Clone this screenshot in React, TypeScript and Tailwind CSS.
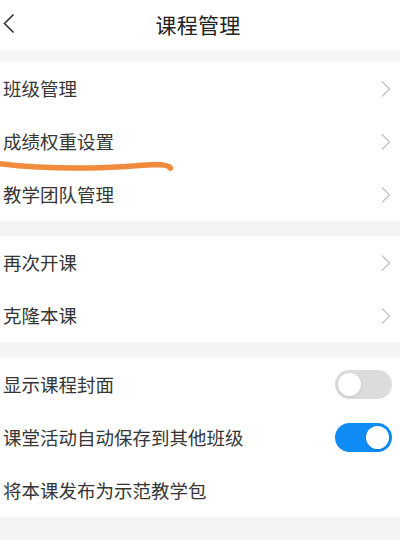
import React, { useState } from "react";

const font = {
  fontFamily: '"Noto Sans CJK SC", "Noto Sans", sans-serif',
};

function Chevron() {
  return (
    <svg width="12" height="18" viewBox="0 0 12 18" fill="none">
      <path d="M2 1.5 L9.5 9 L2 16.5" stroke="#c2c2c2" strokeWidth="1.3" />
    </svg>
  );
}

function Toggle({ on, onClick }: { on: boolean; onClick: () => void }) {
  return (
    <button
      onClick={onClick}
      className={`w-[57px] h-[29px] rounded-full p-[3px] flex items-center ${
        on ? "bg-[#0f8cf5] justify-end" : "bg-[#dcdcdc] justify-start"
      }`}
    >
      <span className="w-[23px] h-[23px] rounded-full bg-white shadow-sm" />
    </button>
  );
}

function Row({
  label,
  right,
}: {
  label: string;
  right?: React.ReactNode;
}) {
  return (
    <div className="h-[53px] flex items-center justify-between pl-[3px] pr-[8px]">
      <span className="text-[18.5px] text-[#363636]">{label}</span>
      {right}
    </div>
  );
}

export default function App() {
  const [showCover, setShowCover] = useState(false);
  const [autoSave, setAutoSave] = useState(true);

  return (
    <div className="w-[400px] h-[540px] bg-[#f3f4f6] overflow-hidden relative" style={font}>
      {/* Header */}
      <div className="h-[50px] bg-white relative flex items-center justify-center">
        <button className="absolute left-[2px] top-[13px]">
          <svg width="14" height="21" viewBox="0 0 14 21" fill="none">
            <path d="M11.5 1.5 L2.5 10.5 L11.5 19.5" stroke="#333" strokeWidth="1.6" />
          </svg>
        </button>
        <h1 className="text-[21px] text-[#222222] tracking-[0.3px] -ml-[4px]">课程管理</h1>
      </div>

      {/* Section 1 */}
      <div className="mt-[12px] bg-white">
        <Row label="班级管理" right={<Chevron />} />
        <Row label="成绩权重设置" right={<Chevron />} />
        <Row label="教学团队管理" right={<Chevron />} />
      </div>

      {/* Section 2 */}
      <div className="mt-[15px] bg-white">
        <Row label="再次开课" right={<Chevron />} />
        <Row label="克隆本课" right={<Chevron />} />
      </div>

      {/* Section 3 */}
      <div className="mt-[16px] bg-white">
        <Row
          label="显示课程封面"
          right={<Toggle on={showCover} onClick={() => setShowCover(!showCover)} />}
        />
        <Row
          label="课堂活动自动保存到其他班级"
          right={<Toggle on={autoSave} onClick={() => setAutoSave(!autoSave)} />}
        />
        <Row label="将本课发布为示范教学包" />
      </div>

      {/* Orange hand-drawn underline */}
      <svg
        className="absolute left-0 top-[155px] pointer-events-none"
        width="180"
        height="22"
        viewBox="0 0 180 22"
        fill="none"
      >
        <path
          d="M-2 8.5 C 30 12.5, 60 13.5, 90 13 C 120 12.5, 140 10, 155 9.5 C 164 9.5, 169 11, 170.5 13"
          stroke="#f08a3c"
          strokeWidth="5.5"
          strokeLinecap="round"
        />
      </svg>
    </div>
  );
}
